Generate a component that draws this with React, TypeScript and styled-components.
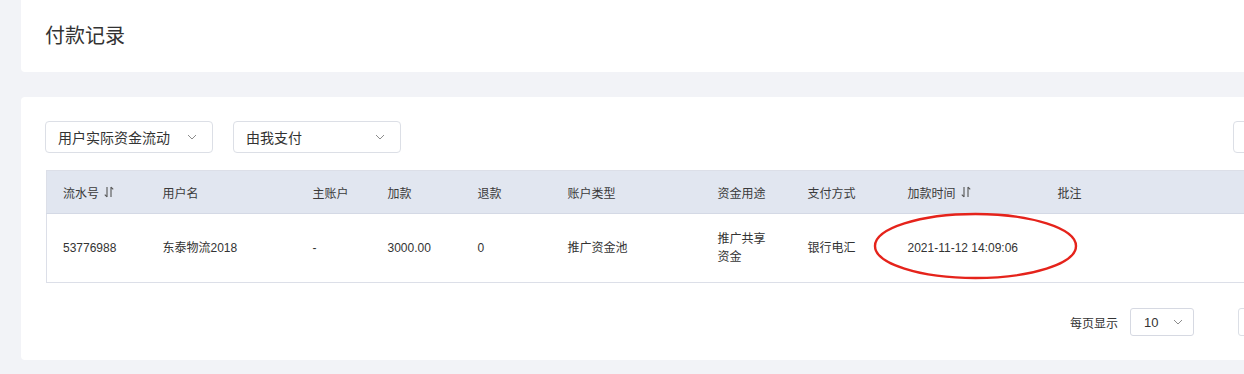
import React from "react";
import styled, { createGlobalStyle } from "styled-components";

const GlobalStyle = createGlobalStyle`
  html, body {
    margin: 0;
    padding: 0;
    background: #f2f3f7;
    overflow: hidden;
  }
  body {
    font-family: "Liberation Sans", "Noto Sans CJK SC", sans-serif;
    color: #333333;
  }
`;

type Column = { key: string; title: string; width: number; sortable?: boolean };

const columns: Column[] = [
  { key: "id", title: "流水号", width: 100, sortable: true },
  { key: "user", title: "用户名", width: 150 },
  { key: "main", title: "主账户", width: 75 },
  { key: "add", title: "加款", width: 90 },
  { key: "refund", title: "退款", width: 90 },
  { key: "type", title: "账户类型", width: 150 },
  { key: "use", title: "资金用途", width: 90 },
  { key: "pay", title: "支付方式", width: 100 },
  { key: "time", title: "加款时间", width: 150, sortable: true },
  { key: "note", title: "批注", width: 350 },
];

const rows = [
  {
    id: "53776988",
    user: "东泰物流2018",
    main: "-",
    add: "3000.00",
    refund: "0",
    type: "推广资金池",
    use: "推广共享资金",
    pay: "银行电汇",
    time: "2021-11-12 14:09:06",
    note: "",
  },
];

function Chevron() {
  return (
    <svg width="10" height="6" viewBox="0 0 10 6">
      <path d="M1 1 L5 5 L9 1" fill="none" stroke="#8c8c8c" strokeWidth="1" />
    </svg>
  );
}

function SortIcon() {
  return (
    <svg width="10" height="12" viewBox="0 0 10 12">
      <path d="M3 1 V11 M0.8 8.6 L3 11 M7 11 V1 M9.2 3.4 L7 1" fill="none" stroke="#555" strokeWidth="1.1" />
    </svg>
  );
}

function App() {
  return (
    <>
      <GlobalStyle />
      <Page>
        <HeaderCard>
          <Title>付款记录</Title>
        </HeaderCard>
        <Card>
          <FilterRow>
            <Select width={168}>
              <span>用户实际资金流动</span>
              <Chevron />
            </Select>
            <Select width={168}>
              <span>由我支付</span>
              <Chevron />
            </Select>
            <Spacer />
            <GhostBox />
          </FilterRow>
          <TableWrap>
            <Table>
              <colgroup>
                {columns.map((c) => (
                  <col key={c.key} style={{ width: c.width }} />
                ))}
              </colgroup>
              <thead>
                <tr>
                  {columns.map((c) => (
                    <Th key={c.key}>
                      <HeadLabel>
                        {c.title}
                        {c.sortable && <SortIcon />}
                      </HeadLabel>
                    </Th>
                  ))}
                </tr>
              </thead>
              <tbody>
                {rows.map((r) => (
                  <tr key={r.id}>
                    {columns.map((c) => (
                      <Td key={c.key}>{r[c.key as keyof typeof r]}</Td>
                    ))}
                  </tr>
                ))}
              </tbody>
            </Table>
            <Mark width="205" height="68" viewBox="0 0 205 68">
              <ellipse cx="102.5" cy="34" rx="100.5" ry="32" fill="none" stroke="#e5231b" strokeWidth="2.4" />
            </Mark>
          </TableWrap>
          <Pager>
            <PagerLabel>每页显示</PagerLabel>
            <SmallSelect>
              <span>10</span>
              <Chevron />
            </SmallSelect>
            <JumpBox />
          </Pager>
        </Card>
      </Page>
    </>
  );
}

const Page = styled.div`
  width: 1320px;
  padding-left: 21px;
  display: flex;
  flex-direction: column;
  gap: 25px;
`;

const HeaderCard = styled.div`
  height: 72px;
  background: #ffffff;
  border-radius: 0 0 4px 4px;
  display: flex;
  align-items: center;
  padding-left: 24px;
  box-sizing: border-box;
`;

const Title = styled.h1`
  margin: 0 0 4px 0;
  font-size: 20px;
  font-weight: 400;
  color: #333333;
  font-family: "Noto Sans CJK SC", sans-serif;
`;

const Card = styled.div`
  background: #ffffff;
  border-radius: 4px;
  padding: 24px 24px 24px 24px;
  display: flex;
  flex-direction: column;
`;

const FilterRow = styled.div`
  display: flex;
  align-items: center;
  gap: 20px;
`;

const Select = styled.div<{ width: number }>`
  width: ${(p) => p.width}px;
  height: 32px;
  box-sizing: border-box;
  border: 1px solid #dcdfe6;
  border-radius: 4px;
  display: flex;
  align-items: center;
  justify-content: space-between;
  padding: 0 15px 0 12px;
  font-size: 14px;
  color: #333333;
`;

const Spacer = styled.div`
  flex: 1;
`;

const GhostBox = styled.div`
  width: 84px;
  height: 32px;
  box-sizing: border-box;
  border: 1px solid #dcdfe6;
  border-radius: 4px;
`;

const TableWrap = styled.div`
  position: relative;
  margin: 17px 0 0 1px;
`;

const Table = styled.table`
  width: 100%;
  table-layout: fixed;
  border-collapse: collapse;
  border: 1px solid #dcdfe8;
  font-size: 12px;
`;

const Th = styled.th`
  height: 42px;
  background: #e1e6f0;
  text-align: left;
  font-weight: 400;
  color: #3a3a3a;
  padding: 0 16px;
  border-bottom: 1px solid #d4d9e5;
`;

const HeadLabel = styled.span`
  display: inline-flex;
  align-items: center;
  gap: 5px;
`;

const Td = styled.td`
  height: 68px;
  padding: 0 16px;
  color: #333333;
  line-height: 18px;
  vertical-align: middle;
`;

const Mark = styled.svg`
  position: absolute;
  left: 827px;
  top: 42px;
  pointer-events: none;
`;

const Pager = styled.div`
  display: flex;
  justify-content: flex-end;
  align-items: center;
  margin-top: 25px;
`;

const PagerLabel = styled.span`
  font-size: 12px;
  color: #333333;
  margin-right: 12px;
`;

const SmallSelect = styled.div`
  width: 64px;
  height: 28px;
  box-sizing: border-box;
  border: 1px solid #d6d9e2;
  border-radius: 3px;
  display: flex;
  align-items: center;
  justify-content: space-between;
  padding: 0 10px 0 13px;
  font-size: 13px;
  color: #333333;
`;

const JumpBox = styled.div`
  width: 79px;
  height: 28px;
  margin-left: 44px;
  box-sizing: border-box;
  border: 1px solid #dcdfe6;
  border-radius: 3px;
`;

export default App;
